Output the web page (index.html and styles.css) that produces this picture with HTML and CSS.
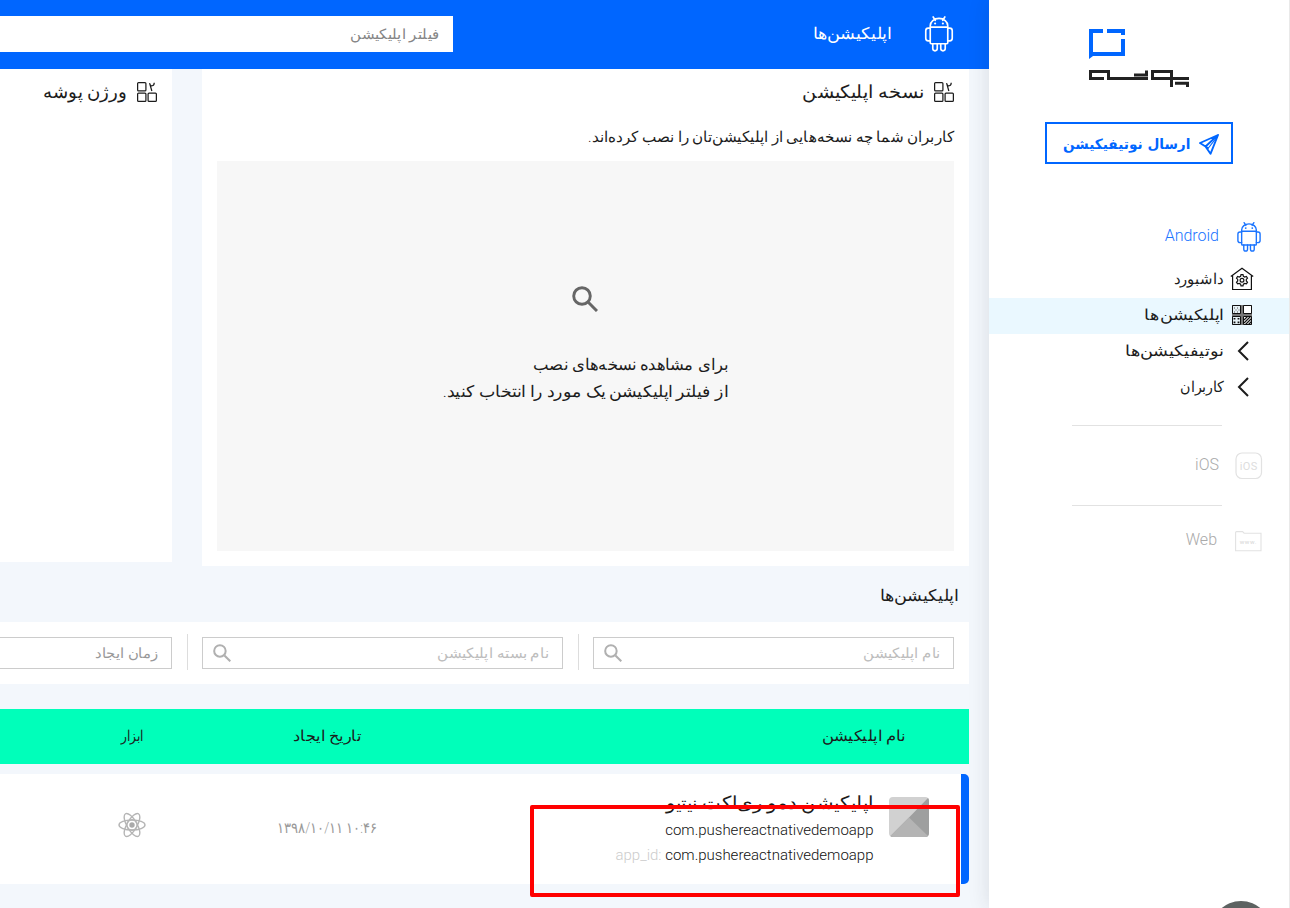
FILE: index.html
```html
<!DOCTYPE html>
<html lang="fa" dir="rtl">
<head>
<meta charset="utf-8">
<title>پوشه</title>
<link rel="stylesheet" href="styles.css">
</head>
<body>
<svg class="defs" width="0" height="0">
  <symbol id="android" viewBox="0 0 30 38">
    <g fill="none" stroke="currentColor" stroke-width="1.7" stroke-linejoin="round" stroke-linecap="round">
      <path d="M9 2l2.2 3.4M21 2l-2.2 3.4M6 12.500v-1.500a9 7.500 0 0 1 18 0v1.500zM6 12.500h18v16a1 1 0 0 1-1 1H7a1 1 0 0 1-1-1z"/>
      <path d="M6 13.500H4a2.600 2.600 0 0 0-2.600 2.600v7.800a2.600 2.600 0 0 0 2.600 2.600h2M24 13.500h2a2.600 2.600 0 0 1 2.600 2.600v7.800a2.600 2.600 0 0 1-2.600 2.600h-2"/>
      <path d="M8.600 29.500v5a2.300 2.300 0 0 0 4.600 0v-5M16.800 29.500v5a2.300 2.300 0 0 0 4.600 0v-5"/>
    </g>
    <circle cx="11" cy="8.700" r="1.100" fill="currentColor"/><circle cx="19" cy="8.700" r="1.100" fill="currentColor"/>
  </symbol>
  <symbol id="search" viewBox="0 0 26 26">
    <circle cx="10" cy="10" r="8.300" fill="none" stroke="currentColor" stroke-width="2.900"/>
    <path d="M16.500 16.500l8.500 8.500" stroke="currentColor" stroke-width="3"/>
  </symbol>
  <symbol id="version" viewBox="0 0 21 21">
    <g fill="none" stroke="currentColor" stroke-width="1.300">
      <rect x=".65" y=".65" width="8.700" height="8.700" rx="1"/>
      <rect x=".65" y="11.650" width="8.700" height="8.700" rx="1"/>
      <rect x="11.650" y="11.650" width="8.700" height="8.700" rx="1"/>
      <path d="M13.200 1.200l2.400 8.200M13.600 2.600c.5 2 4.400 2.200 4.500-1.800"/>
    </g>
  </symbol>
  <symbol id="chevron" viewBox="0 0 12 20">
    <path d="M11 1L2 10l9 9" fill="none" stroke="currentColor" stroke-width="2"/>
  </symbol>
</svg>
<div class="page">
  <aside class="sidebar">
    <svg class="logo" viewBox="0 0 100 59">
      <path fill="#06f" d="M0 0h14v4H4v19h28V10h4v17H4l-4 3zM18 0h18v6h-4V4H18z"/>
      <g fill="none" stroke="#222" stroke-width="3">
        <path d="M15 49.500H1.500v-7H19.500v7H59M45 46h12.500V41.500M100 49.500H63.500v-7H82.500v15.500M86 54.200h12.500V58"/>
      </g>
    </svg>
    <button class="send">
      <svg class="plane" viewBox="0 0 20 21"><path d="M19 1L1 9l5.500 3.500L11.500 19.800zM19 1L6.500 12.500l3 2" fill="none" stroke="currentColor" stroke-width="1.900" stroke-linejoin="round"/><path d="M18 3L9 14.500" stroke="currentColor" stroke-width="1.200"/></svg>
      <span class="fit w-send">ارسال نوتیفیکیشن</span>
    </button>
    <nav class="nav">
      <div class="platform platform-on">
        <svg class="droid-side"><use href="#android"/></svg><span>Android</span>
      </div>
      <a class="item">
        <svg class="item-icon" viewBox="0 0 24 24" fill="none" stroke="#111" stroke-width="1.200"><path d="M.8 9.500L12 1.200l11.200 8.300M2.600 8.500v14h18.800v-14"/><circle cx="12" cy="13.300" r="1.900"/><path d="M11 7.600h2l.4 1.700 1.300.7 1.700-.6 1.100 1.700-1.200 1.300v1.500l1.200 1.300-1.100 1.700-1.700-.5-1.300.7-.4 1.700h-2l-.4-1.700-1.300-.7-1.700.5-1.100-1.700 1.200-1.300v-1.500l-1.200-1.300 1.100-1.700 1.700.6 1.300-.7z"/></svg>
        <span class="fit w-dash">داشبورد</span>
      </a>
      <a class="item item-on">
        <svg class="item-icon" viewBox="0 0 24 24"><rect x="2" y="2" width="20" height="20" fill="#777"/><path d="M2.500 2.500h8v8h-8zM2.500 13.500h8v8h-8z" fill="#e6f1f5" stroke="#111"/><path d="M13.500 2.500h8v8h-8zM13.500 13.500h8v8h-8z" fill="#fff" stroke="#111"/><path d="M4 5h1m2 0h1M5.500 7h1m2 0h1M4 9h1m2 0h1" stroke="#555"/><path d="M4.500 15v5.500M8.500 15v5.500" stroke="#111" stroke-width="1.800" stroke-dasharray="1.600 2"/><path d="M14 17l3.500-3.500M14 20l6.500-6.500M15.500 21.500l6-6M18.500 21.500l3-3" stroke="#111" stroke-width="1.200"/></svg>
        <span class="fit w-apps">اپلیکیشن‌ها</span>
      </a>
      <a class="item">
        <svg class="item-chevron"><use href="#chevron"/></svg><span class="fit w-notif">نوتیفیکیشن‌ها</span>
      </a>
      <a class="item">
        <svg class="item-chevron"><use href="#chevron"/></svg><span class="fit w-users">کاربران</span>
      </a>
      <hr>
      <div class="platform platform-off">
        <svg class="os-icon" viewBox="0 0 28 28"><rect x="1" y="1" width="25.500" height="25.500" rx="6" fill="none" stroke="#e2e2e2" stroke-width="1.200"/><text x="13.800" y="17.700" text-anchor="middle" class="ios-text">iOS</text></svg><span>iOS</span>
      </div>
      <hr>
      <div class="platform platform-off platform-web">
        <svg class="web-icon" viewBox="0 0 27 21"><path d="M.6 19.700V1.600q0-1 1-1h6l1.500 1.600H26v17.500z" fill="none" stroke="#e2e2e2" stroke-width="1.100"/><text x="13.300" y="13.300" text-anchor="middle" class="www-text" direction="ltr">www.</text></svg><span>Web</span>
      </div>
    </nav>
    <div class="chat"></div>
  </aside>

  <main class="main">
    <header class="top">
      <div class="top-title">
        <svg class="droid-top"><use href="#android"/></svg>
        <span class="fit w-top">اپلیکیشن‌ها</span>
      </div>
      <div class="top-filter"><span class="fit w-filter">فیلتر اپلیکیشن</span></div>
    </header>
    <div class="content">
      <section class="cards">
        <article class="card">
          <h2><svg class="version" viewBox="0 0 21 21"><use href="#version"/></svg><span class="fit w-h1">نسخه اپلیکیشن</span></h2>
          <p class="lead"><span class="fit w-lead">کاربران شما چه نسخه‌هایی از اپلیکیشن‌تان را نصب کرده‌اند.</span></p>
          <div class="empty">
            <svg class="empty-icon"><use href="#search"/></svg>
            <div class="empty-text"><span class="fit w-e1">برای مشاهده نسخه‌های نصب</span><br><span class="fit w-e2">از فیلتر اپلیکیشن یک مورد را انتخاب کنید.</span></div>
          </div>
        </article>
        <article class="card card-short">
          <h2><svg class="version" viewBox="0 0 21 21"><use href="#version"/></svg><span class="fit w-h2">ورژن پوشه</span></h2>
        </article>
      </section>
      <h3 class="section-title"><span class="fit w-top">اپلیکیشن‌ها</span></h3>
      <section class="filters">
        <div class="field"><span class="fit w-f1">نام اپلیکیشن</span><svg><use href="#search"/></svg></div>
        <div class="field"><span class="fit w-f2">نام بسته اپلیکیشن</span><svg><use href="#search"/></svg></div>
        <div class="field field-date"><span class="fit w-f3">زمان ایجاد</span></div>
      </section>
      <section class="table">
        <div class="thead">
          <div class="c-name"><span class="fit w-t1">نام اپلیکیشن</span></div>
          <div class="c-date"><span class="fit w-t2">تاریخ ایجاد</span></div>
          <div class="c-tool"><span class="fit w-t3">ابزار</span></div>
        </div>
        <div class="row">
          <div class="c-name app">
            <svg class="app-icon" viewBox="0 0 40 40"><rect width="40" height="40" rx="4" fill="#d1d1d1"/><path d="M39 1L20 20.500 1.500 39q1 1 2.500 1H36q4 0 4-4V4q0-2-1-3z" fill="#9e9f9f"/><path d="M20 20.500L1.500 39q1 1 2.500 1h32q2 0 3-1z" fill="#b4b4b4"/></svg>
            <div class="app-info">
              <div class="app-title"><span class="fit w-title">اپلیکیشن دمو ری‌اکت نیتیو</span></div>
              <div class="app-pkg">com.pushereactnativedemoapp</div>
              <div class="app-pkg"><em>app_id:</em> com.pushereactnativedemoapp</div>
            </div>
          </div>
          <div class="c-date"><span class="fit w-date">۱۰:۴۶ ۱۳۹۸/۱۰/۱۱</span></div>
          <div class="c-tool">
            <svg class="react" viewBox="-14 -13 28 26"><g fill="none" stroke="#b5b5b5" stroke-width="1.400"><ellipse rx="13" ry="5"/><ellipse rx="13" ry="5" transform="rotate(60)"/><ellipse rx="13" ry="5" transform="rotate(120)"/><circle r="5.200"/></g><circle r="2.700" fill="#aaa"/></svg>
          </div>
        </div>
      </section>
    </div>
    <div class="highlight"></div>
  </main>
</div>
</body>
</html>
```

FILE: styles.css
```css
* { box-sizing: border-box; }
body { margin: 0; background: #fff; color: #1c1c1c; font-family: Roboto, "DejaVu Sans", sans-serif; font-weight: 300; }
.defs { position: absolute; }
svg { flex: none; display: block; }
h2, h3, p { margin: 0; font-weight: 300; }
span { white-space: nowrap; }
.page { display: flex; height: 908px; overflow: hidden; }

.fit { display: inline-block; transform-origin: 100% 50%; }
.w-send { transform: scaleX(.977); }
.w-dash { transform: scaleX(.99); }
.w-apps { transform: scaleX(1.17); }
.w-notif { transform: scaleX(1.18); }
.w-users { transform: scaleX(.95); }
.w-top { transform: scaleX(1.1); }
.w-filter { transform: scaleX(1.07); }
.w-h1 { transform: scaleX(1.075); }
.w-h2 { transform: scaleX(1.01); }
.w-lead { transform: scaleX(1.011); }
.w-e1 { transform: scaleX(1.027); }
.w-e2 { transform: scaleX(1.085); }
.w-f1 { transform: scaleX(1.065); }
.w-f2 { transform: scaleX(1.078); }
.w-f3 { transform: scaleX(1.059); }
.w-t1 { transform: scaleX(1.094); }
.w-t2 { transform: scaleX(1.073); transform-origin: 50% 50%; }
.w-t3 { transform: scaleX(.82); transform-origin: 50% 50%; }
.w-title { transform: scaleX(1.096); }
.w-date { transform: scaleX(.875); transform-origin: 50% 50%; }

.sidebar { position: relative; z-index: 2; width: 301px; flex: none; background: #fff; border-right: 1px solid #e9e9e9; box-shadow: 0 0 20px rgba(40, 40, 50, .13); display: flex; flex-direction: column; align-items: center; }
.logo { width: 100px; height: 59px; margin-top: 29px; }
.send { width: 188px; height: 42px; margin-top: 34px; padding: 2px 12px 0 0; border: 2px solid #06f; background: #fff; color: #06f; display: flex; align-items: center; gap: 9px; font: bold 14px/1 "DejaVu Sans", sans-serif; }
.plane { width: 20px; height: 21px; }
.nav { width: 100%; margin-top: 46px; }
.platform { height: 52px; display: flex; align-items: center; font-size: 16px; }
.platform-on { color: #1a74ff; padding-right: 26px; gap: 16px; }
.platform-on span { padding-bottom: 2px; }
.droid-side { width: 28px; height: 31px; }
.item { height: 36px; display: flex; align-items: center; padding: 0 35px 2px 0; gap: 6px; font-size: 15px; }
.item-on { background: #eaf8ff; }
.item-icon { width: 24px; height: 24px; }
.item-chevron { width: 12px; height: 20px; margin: 0 5px 0 7px; }
.nav hr { height: 1px; margin: 19px 67px 0 83px; border: 0; background: #e2e2e2; }
.platform-off { height: 79px; color: #aaa; padding-right: 26px; gap: 16px; }
.platform-off span { padding-bottom: 2px; }
.nav .platform-off + hr { margin-top: 0; }
.os-icon { width: 28px; height: 28px; }
.web-icon { width: 27px; height: 21px; }
.platform-web { height: 70px; gap: 18px; padding-right: 27px; }
.platform-web span { padding-bottom: 4px; }
.ios-text { font: 400 11px Roboto, sans-serif; fill: #ddd; letter-spacing: .4px; }
.www-text { font: 400 6px Roboto, sans-serif; fill: #d4d4d4; letter-spacing: .6px; }
.chat { position: absolute; left: 222px; top: 901px; width: 60px; height: 60px; border-radius: 50%; background: #5d6261; }

.main { position: relative; width: 989px; flex: none; overflow: hidden; background: #f3f7fc; }
.top { height: 69px; background: #06f; display: flex; align-items: center; padding: 0 35px 1px 0; }
.top-title { width: 501px; flex: none; display: flex; align-items: center; gap: 33px; color: #fff; font-size: 16px; }
.top-title span { padding-bottom: 2px; }
.droid-top { width: 30px; height: 37px; margin-bottom: 1px; }
.top-filter { width: 480px; height: 36px; flex: none; background: #fff; color: #858585; display: flex; align-items: center; padding-right: 14px; font-size: 14px; }
.content { padding-right: 20px; }
.cards { display: flex; gap: 30px; align-items: flex-start; height: 497px; }
.card { width: 767px; height: 497px; flex: none; background: #fff; padding: 0 15px; }
.card-short { height: 493px; }
.card h2 { height: 46px; display: flex; align-items: center; gap: 10px; font-size: 18px; }
.card h2 span { padding-bottom: 2px; }
.version { width: 20px; height: 20px; }
.lead { height: 46px; padding-bottom: 2px; display: flex; align-items: center; font-size: 14.5px; }
.empty { height: 390px; background: #f7f7f7; display: flex; flex-direction: column; align-items: center; padding-top: 125px; }
.empty-icon { width: 26px; height: 26px; margin-right: 1px; }
.empty-icon { color: #666; }
.empty-text { width: 285px; margin-top: 40px; line-height: 27px; font-size: 15.5px; }
.section-title { height: 56px; padding: 2px 11px 0 0; display: flex; align-items: center; font-size: 16px; }
.filters { display: flex; width: 1158px; height: 62px; background: #fff; padding: 12px 15px; }
.field { position: relative; width: 361px; height: 32px; margin-top: 3px; flex: none; border: 1px solid #ccc; display: flex; align-items: center; justify-content: space-between; padding: 0 13px 0 10px; color: #bdbdbd; font-size: 14px; }
.field + .field { margin-right: 30px; }
.field + .field::before { content: ""; position: absolute; right: -17px; top: -4px; width: 1px; height: 36px; background: #ddd; }
.field svg { width: 18px; height: 18px; color: #b0b0b0; }
.field-date { color: #999; }
.table { width: 1158px; margin-top: 25px; }
.thead, .row { display: flex; }
.thead { height: 55px; background: #00ffba; align-items: center; font-size: 14.5px; }
.c-name { width: 559px; padding-right: 63px; flex: none; }
.c-date { width: 166px; flex: none; text-align: center; }
.c-tool { width: 224px; flex: none; display: flex; justify-content: center; }
.row { height: 110px; margin-top: 10px; background: #fff; border-right: 8px solid #06f; border-radius: 0 5px 5px 0; }
.row .c-name { width: 551px; padding-right: 32px; }
.app { display: flex; gap: 15.5px; }
.app-icon { width: 40px; height: 40px; margin-top: 23px; }
.app-info { padding-top: 15px; }
.app-title { height: 29px; line-height: 28px; font-size: 17.5px; }
.app-pkg { direction: ltr; text-align: right; font-size: 15px; line-height: 25px; color: #111; }
.app-pkg em { font-style: normal; color: #ccc; }
.row .c-date { color: #999; font-size: 14.5px; line-height: 109px; }
.react { width: 28px; height: 26px; margin-top: 38px; }
.highlight { position: absolute; left: 530px; top: 805px; width: 430px; height: 92px; border: 4px solid #f00; border-radius: 2px; }
```
